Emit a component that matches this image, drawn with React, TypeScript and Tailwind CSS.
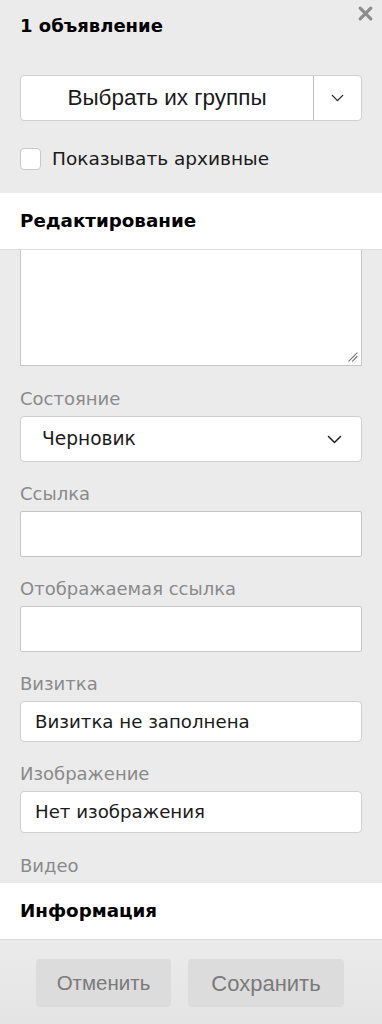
import React from "react";

function Chevron({ className }: { className?: string }) {
  return (
    <svg viewBox="0 0 20 12" className={className} fill="none" stroke="currentColor" strokeWidth="2" strokeLinecap="round" strokeLinejoin="round">
      <path d="M2 2l8 8 8-8" />
    </svg>
  );
}

function Label({ children }: { children: React.ReactNode }) {
  return (
    <div className="text-[18px] leading-[22px] text-[#8a8a8a] mb-[6px] font-['DejaVu_Sans',sans-serif]">{children}</div>
  );
}

export default function App() {
  return (
    <div className="w-[382px] h-[1024px] bg-[#ebebeb] flex flex-col overflow-hidden font-['DejaVu_Sans',sans-serif] text-black">
      {/* Top section */}
      <div className="relative h-[193px] shrink-0 px-[20px] pt-[15px]">
        <div className="text-[18px] leading-[22px] font-bold">1 объявление</div>
        <button className="absolute right-[7px] top-[4px] w-[19px] h-[19px] text-[#8c8c8c] flex items-center justify-center">
          <svg viewBox="0 0 16 16" className="w-[17px] h-[17px]" fill="none" stroke="currentColor" strokeWidth="3" strokeLinecap="round">
            <path d="M3 3l10 10M13 3L3 13" />
          </svg>
        </button>
        <div className="mt-[38px] flex h-[46px] rounded-[4px] border border-[#cfcfcf] bg-white">
          <div className="flex-1 flex items-center justify-center text-[22.5px] font-['Liberation_Sans',Arial,sans-serif] text-[#1a1a1a] border-r border-[#bdbdbd]">
            Выбрать их группы
          </div>
          <div className="w-[47px] flex items-center justify-center text-[#222]">
            <Chevron className="w-[13px] h-[8px]" />
          </div>
        </div>
        <div className="mt-[27px] flex items-center gap-[11px]">
          <div className="w-[21px] h-[22px] rounded-[4px] border border-[#c8c8c8] bg-white" />
          <div className="text-[18.5px] leading-[22px] text-[#1a1a1a]">Показывать архивные</div>
        </div>
      </div>

      {/* Editing header */}
      <div className="h-[57px] shrink-0 bg-white border-b border-[#dcdcdc] flex items-center px-[20px]">
        <div className="text-[18.3px] font-bold">Редактирование</div>
      </div>

      {/* Scroll area */}
      <div className="flex-1 min-h-0 overflow-hidden px-[20px]">
        <div className="relative h-[116px] bg-white border-x border-b border-[#c6c6c6]">
          <svg viewBox="0 0 12 12" className="absolute right-[3px] bottom-[3px] w-[11px] h-[11px]" stroke="#777" strokeWidth="1.2" strokeLinecap="round">
            <path d="M11 2L2 11M11 6L6 11" />
          </svg>
        </div>

        <div className="mt-[22px]">
          <Label>Состояние</Label>
          <div className="h-[46px] rounded-[4px] border border-[#cfcfcf] bg-white flex items-center justify-between pl-[21px] pr-[19px]">
            <span className="text-[18.6px] text-[#1a1a1a]">Черновик</span>
            <Chevron className="w-[15px] h-[9px] text-[#222]" />
          </div>
        </div>

        <div className="mt-[21px]">
          <Label>Ссылка</Label>
          <div className="h-[46px] rounded-[2px] border border-[#c6c6c6] bg-white" />
        </div>

        <div className="mt-[21px]">
          <Label>Отображаемая ссылка</Label>
          <div className="h-[46px] rounded-[2px] border border-[#c6c6c6] bg-white" />
        </div>

        <div className="mt-[21px]">
          <Label>Визитка</Label>
          <div className="h-[41px] rounded-[4px] border border-[#cfcfcf] bg-white flex items-center px-[14px]">
            <span className="text-[18.2px] text-[#1a1a1a]">Визитка не заполнена</span>
          </div>
        </div>

        <div className="mt-[21px]">
          <Label>Изображение</Label>
          <div className="h-[42px] rounded-[4px] border border-[#cfcfcf] bg-white flex items-center px-[14px]">
            <span className="text-[18.2px] text-[#1a1a1a]">Нет изображения</span>
          </div>
        </div>

        <div className="mt-[22px]">
          <Label>Видео</Label>
          <div className="h-[46px] border-t border-[#b5b5b5]" />
        </div>
      </div>

      {/* Info header */}
      <div className="h-[57px] shrink-0 bg-white border-b border-[#dcdcdc] flex items-center px-[20px]">
        <div className="text-[18.3px] font-bold">Информация</div>
      </div>

      {/* Footer */}
      <div className="h-[84px] shrink-0 flex items-start pt-[19px] pl-[36px] gap-[17px] bg-gradient-to-b from-[#ebebeb] to-[#e4e4e4]">
        <button className="w-[135px] h-[48px] rounded-[4px] bg-[#dcdcdc] text-[#7a7a7a] text-[20.5px] font-['Liberation_Sans',Arial,sans-serif]">
          Отменить
        </button>
        <button className="w-[156px] h-[48px] rounded-[4px] bg-[#dcdcdc] text-[#7a7a7a] text-[22px] font-['Liberation_Sans',Arial,sans-serif]">
          Сохранить
        </button>
      </div>
    </div>
  );
}
